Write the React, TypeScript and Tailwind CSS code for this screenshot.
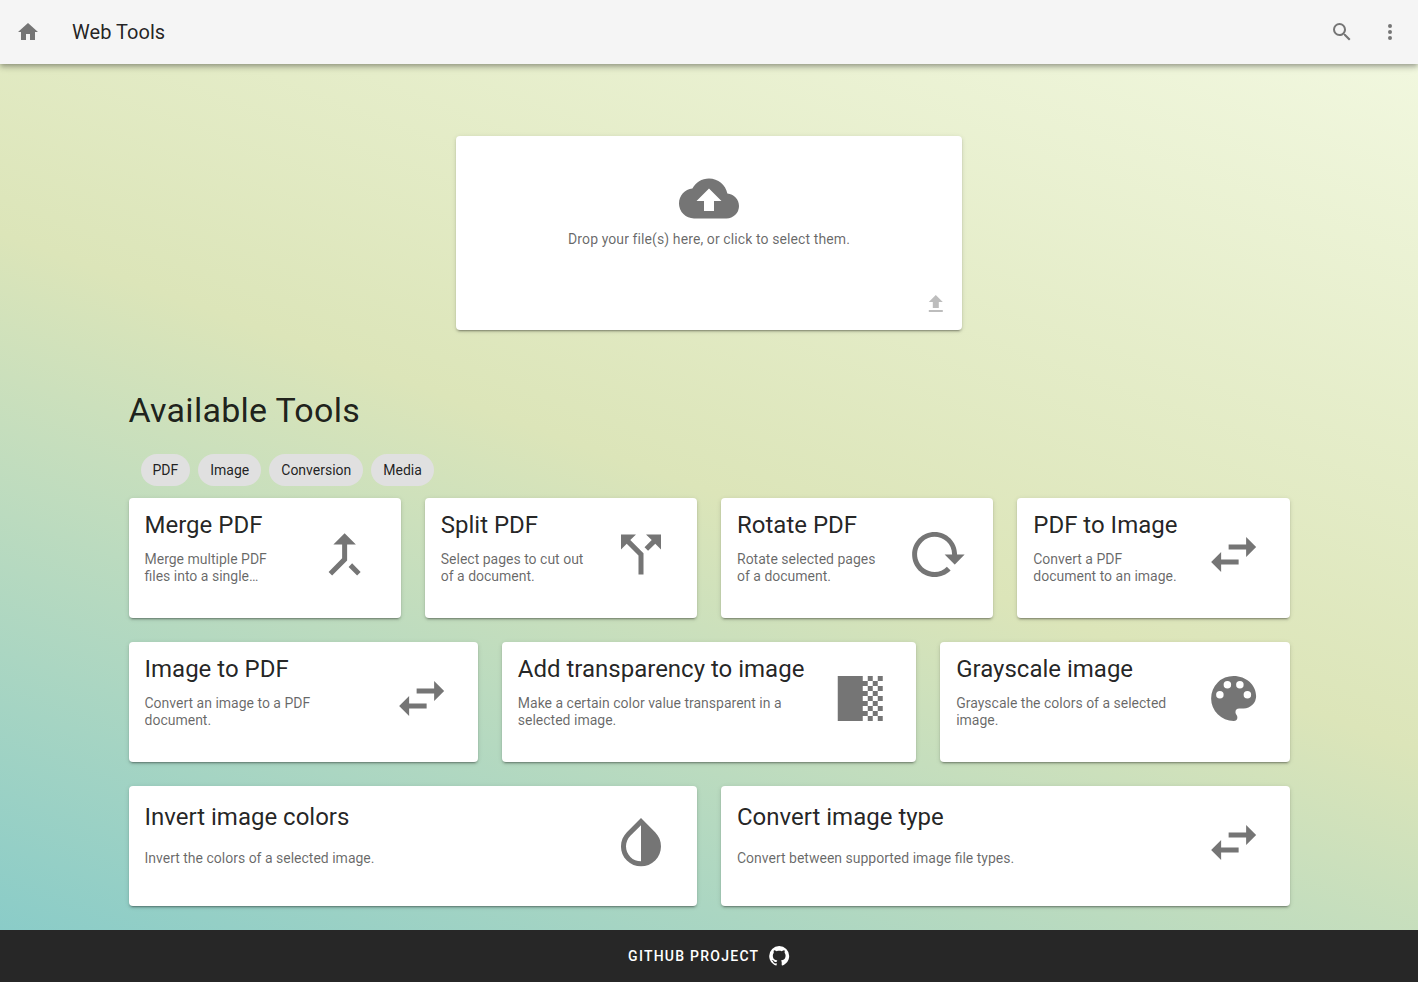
import React from "react";

const paths = {
  home: "M10,20V14H14V20H19V12H22L12,3L2,12H5V20H10Z",
  magnify:
    "M9.5,3A6.5,6.5 0 0,1 16,9.5C16,11.11 15.41,12.59 14.44,13.73L14.71,14H15.5L20.5,19L19,20.5L14,15.5V14.71L13.73,14.44C12.59,15.41 11.11,16 9.5,16A6.5,6.5 0 0,1 3,9.5A6.5,6.5 0 0,1 9.5,3M9.5,5C7,5 5,7 5,9.5C5,12 7,14 9.5,14C12,14 14,12 14,9.5C14,7 12,5 9.5,5Z",
  dots: "M12,16A2,2 0 0,1 14,18A2,2 0 0,1 12,20A2,2 0 0,1 10,18A2,2 0 0,1 12,16M12,10A2,2 0 0,1 14,12A2,2 0 0,1 12,14A2,2 0 0,1 10,12A2,2 0 0,1 12,10M12,4A2,2 0 0,1 14,6A2,2 0 0,1 12,8A2,2 0 0,1 10,6A2,2 0 0,1 12,4Z",
  cloud:
    "M14,13V17H10V13H7L12,8L17,13M19.35,10.03C18.67,6.59 15.64,4 12,4C9.11,4 6.6,5.64 5.35,8.03C2.34,8.36 0,10.9 0,14A6,6 0 0,0 6,20H19A5,5 0 0,0 24,15C24,12.36 21.95,10.22 19.35,10.03Z",
  upload: "M9,16V10H5L12,3L19,10H15V16H9M5,20V18H19V20H5Z",
  merge:
    "M17,20.41L18.41,19L15,15.59L13.59,17M7.5,8H11V13.59L5.59,19L7,20.41L13,14.41V8H16.5L12,3.5",
  split:
    "M14,4L16.29,6.29L13.41,9.17L14.83,10.59L17.71,7.71L20,10V4M10,4H4V10L6.29,7.71L11,12.41V20H13V11.59L7.71,6.29",
  rotate:
    "M2 12C2 16.97 6.03 21 11 21C13.39 21 15.68 20.06 17.4 18.4L15.9 16.9C14.63 18.25 12.86 19 11 19C4.76 19 1.64 11.46 6.05 7.05C10.46 2.64 18 5.77 18 12H15L19 16H19.1L23 12H20C20 7.03 15.97 3 11 3C6.03 3 2 7.03 2 12Z",
  swap: "M21,9L17,5V8H10V10H17V13M7,11L3,15L7,19V16H14V14H7V11Z",
  transparency:
    "M3,3H13V5H15V7H13V9H15V11H13V13H15V15H13V17H15V19H13V21H3ZM15,3H17V5H15ZM15,7H17V9H15ZM15,11H17V13H15ZM15,15H17V17H15ZM15,19H17V21H15ZM17,5H19V7H17ZM17,9H19V11H17ZM17,13H19V15H17ZM17,17H19V19H17ZM19,3H21V5H19ZM19,7H21V9H19ZM19,11H21V13H19ZM19,15H21V17H19ZM19,19H21V21H19Z",
  palette:
    "M17.5,12A1.5,1.5 0 0,1 16,10.5A1.5,1.5 0 0,1 17.5,9A1.5,1.5 0 0,1 19,10.5A1.5,1.5 0 0,1 17.5,12M14.5,8A1.5,1.5 0 0,1 13,6.5A1.5,1.5 0 0,1 14.5,5A1.5,1.5 0 0,1 16,6.5A1.5,1.5 0 0,1 14.5,8M9.5,8A1.5,1.5 0 0,1 8,6.5A1.5,1.5 0 0,1 9.5,5A1.5,1.5 0 0,1 11,6.5A1.5,1.5 0 0,1 9.5,8M6.5,12A1.5,1.5 0 0,1 5,10.5A1.5,1.5 0 0,1 6.5,9A1.5,1.5 0 0,1 8,10.5A1.5,1.5 0 0,1 6.5,12M12,3A9,9 0 0,0 3,12A9,9 0 0,0 12,21A1.5,1.5 0 0,0 13.5,19.5C13.5,19.11 13.35,18.76 13.11,18.5C12.88,18.23 12.73,17.88 12.73,17.5A1.5,1.5 0 0,1 14.23,16H16A5,5 0 0,0 21,11C21,6.58 16.97,3 12,3Z",
  invert:
    "M12,19.58V19.58C10.4,19.58 8.89,18.96 7.76,17.83C6.62,16.69 6,15.19 6,13.58C6,12 6.62,10.47 7.76,9.34L12,5.1M17.66,7.93L12,2.27V2.27L6.34,7.93C3.22,11.05 3.22,16.12 6.34,19.24C7.9,20.8 9.95,21.58 12,21.58C14.05,21.58 16.1,20.8 17.66,19.24C20.78,16.12 20.78,11.05 17.66,7.93Z",
  github:
    "M12,2A10,10 0 0,0 2,12C2,16.42 4.87,20.17 8.84,21.5C9.34,21.58 9.5,21.27 9.5,21C9.5,20.77 9.5,20.14 9.5,19.31C6.73,19.91 6.14,17.97 6.14,17.97C5.68,16.81 5.03,16.5 5.03,16.5C4.12,15.88 5.1,15.9 5.1,15.9C6.1,15.97 6.63,16.93 6.63,16.93C7.5,18.45 8.97,18 9.54,17.76C9.63,17.11 9.89,16.67 10.17,16.42C7.95,16.17 5.62,15.31 5.62,11.5C5.62,10.39 6,9.5 6.65,8.79C6.55,8.54 6.2,7.5 6.75,6.15C6.75,6.15 7.59,5.88 9.5,7.17C10.29,6.95 11.15,6.84 12,6.84C12.85,6.84 13.71,6.95 14.5,7.17C16.41,5.88 17.25,6.15 17.25,6.15C17.8,7.5 17.45,8.54 17.35,8.79C18,9.5 18.38,10.39 18.38,11.5C18.38,15.32 16.04,16.16 13.81,16.41C14.17,16.72 14.5,17.33 14.5,18.26C14.5,19.6 14.5,20.68 14.5,21C14.5,21.27 14.66,21.59 15.17,21.5C19.14,20.16 22,16.42 22,12A10,10 0 0,0 12,2Z",
};

type IconName = keyof typeof paths;

// Sub-pixel optical adjustments, in 24-unit icon space.
const nudges: Partial<Record<IconName, string>> = {
  cloud: "translate(0 0.15)",
  merge: "translate(-0.15 0.15)",
  split: "translate(0 0.15)",
  rotate: "translate(0.05 0.15)",
  swap: "translate(-0.15 0.15)",
  transparency: "translate(0.1 0.15)",
  palette: "translate(-0.15 0.15)",
  invert: "translate(0 0.15)",
  upload: "translate(-0.2 0)",
  github: "translate(0.2 0)",
};

function Icon({ name, className }: { name: IconName; className: string }) {
  return (
    <svg viewBox="0 0 24 24" fill="currentColor" className={`shrink-0 overflow-visible ${className}`} aria-hidden="true">
      <path d={paths[name]} transform={nudges[name]} />
    </svg>
  );
}

const cardShadow =
  "shadow-[0_3px_1px_-2px_rgba(0,0,0,0.2),0_2px_2px_0_rgba(0,0,0,0.14),0_1px_5px_0_rgba(0,0,0,0.12)]";

interface Tool {
  title: string;
  lines: string[];
  icon: IconName;
}

const rows: { columns: string; tools: Tool[] }[] = [
  {
    columns: "grid-cols-4",
    tools: [
      { title: "Merge PDF", lines: ["Merge multiple PDF", "files into a single…"], icon: "merge" },
      { title: "Split PDF", lines: ["Select pages to cut out", "of a document."], icon: "split" },
      { title: "Rotate PDF", lines: ["Rotate selected pages", "of a document."], icon: "rotate" },
      { title: "PDF to Image", lines: ["Convert a PDF", "document to an image."], icon: "swap" },
    ],
  },
  {
    columns: "grid-cols-[349.3px_414.4px_1fr]",
    tools: [
      { title: "Image to PDF", lines: ["Convert an image to a PDF", "document."], icon: "swap" },
      {
        title: "Add transparency to image",
        lines: ["Make a certain color value transparent in a", "selected image."],
        icon: "transparency",
      },
      { title: "Grayscale image", lines: ["Grayscale the colors of a selected", "image."], icon: "palette" },
    ],
  },
  {
    columns: "grid-cols-2",
    tools: [
      { title: "Invert image colors", lines: ["Invert the colors of a selected image."], icon: "invert" },
      { title: "Convert image type", lines: ["Convert between supported image file types."], icon: "swap" },
    ],
  },
];

function ToolCard({ tool }: { tool: Tool }) {
  const single = tool.lines.length === 1;
  return (
    <article className={`flex h-[120px] min-w-0 justify-between rounded bg-white pl-4 pr-[26px] ${cardShadow}`}>
      <div className={single ? "pt-[15px]" : "pt-[11px]"}>
        <h2 className="whitespace-nowrap text-2xl leading-8 text-black/87">{tool.title}</h2>
        <div
          className={`whitespace-nowrap text-sm leading-[17px] text-black/60 ${
            single ? "mt-[17px]" : "mt-[10px]"
          }`}
        >
          {tool.lines.map((line) => (
            <p key={line}>{line}</p>
          ))}
        </div>
      </div>
      <Icon name={tool.icon} className="mt-[26px] size-[60px] text-[#757575]" />
    </article>
  );
}

export default function App() {
  return (
    <div className="flex h-[982px] flex-col bg-[linear-gradient(20deg,#84cac9_0%,#dce5b9_50%,#f3f9e2_100%)] font-['Roboto',sans-serif] text-black/87">
      <header className="flex h-16 shrink-0 items-center bg-[#f5f5f5] px-4 shadow-[0_2px_4px_-1px_rgba(0,0,0,0.2),0_4px_5px_0_rgba(0,0,0,0.14),0_1px_10px_0_rgba(0,0,0,0.12)]">
        <Icon name="home" className="size-6 text-[#757575]" />
        <h1 className="ml-8 flex-1 text-xl leading-[30px] tracking-[0.04px]">Web Tools</h1>
        <Icon name="magnify" className="size-6 text-[#757575]" />
        <Icon name="dots" className="ml-6 size-6 text-[#757575]" />
      </header>

      <main className="flex-1">
        <section
          className={`mx-auto mt-[72px] flex h-[194px] w-[506px] flex-col items-center rounded bg-white pt-8 ${cardShadow}`}
        >
          <Icon name="cloud" className="size-[60px] text-[#757575]" />
          <p className="text-sm leading-[22px] tracking-[0.1px] text-black/60">
            Drop your file(s) here, or click to select them.
          </p>
          <Icon name="upload" className="mr-[14px] mt-[42px] size-6 self-end text-[#bdbdbd]" />
        </section>

        <section className="mx-auto w-[1161px]">
          <h2 className="mt-[60px] h-10 text-[34px] leading-10 tracking-[0.27px]">Available Tools</h2>
          <div className="ml-3 mt-6 flex gap-2">
            {["PDF", "Image", "Conversion", "Media"].map((label) => (
              <span key={label} className="flex h-8 items-center rounded-full bg-[#e0e0e0] px-3 text-sm">
                {label}
              </span>
            ))}
          </div>
          <div className="mt-3 flex flex-col gap-6">
            {rows.map((row) => (
              <div key={row.columns} className={`grid gap-6 ${row.columns}`}>
                {row.tools.map((tool) => (
                  <ToolCard key={tool.title} tool={tool} />
                ))}
              </div>
            ))}
          </div>
        </section>
      </main>

      <footer className="flex h-[52px] shrink-0 items-center justify-center bg-[#272727] text-white">
        <span className="ml-[1px] text-sm font-medium tracking-[1.25px]">GITHUB PROJECT</span>
        <Icon name="github" className="ml-[7.5px] size-6" />
      </footer>
    </div>
  );
}
